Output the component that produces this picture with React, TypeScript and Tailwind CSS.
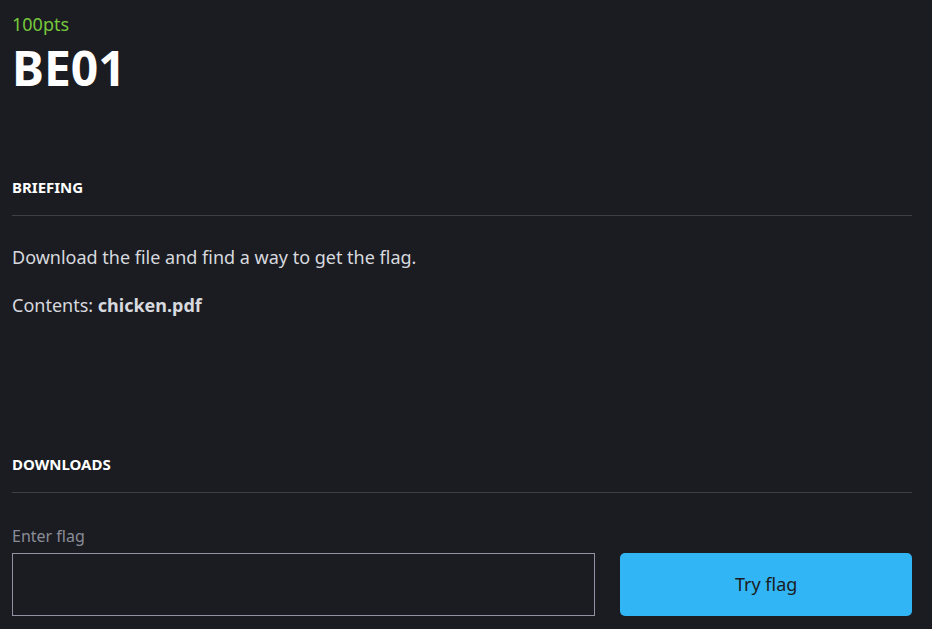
export default function App() {
  return (
    <div className="min-h-screen bg-[#1b1c21] pl-3 pr-5 pt-[10px] font-['Noto_Sans',sans-serif] text-[#d7d9df]">
      <div className="text-[18px] leading-[28px] text-[#76c83c]">100pts</div>
      <h1 className="text-[48px] font-bold leading-[60px] text-white">BE01</h1>

      <section className="mt-[77px]">
        <h2 className="text-[15px] font-bold leading-[24px] text-white">BRIEFING</h2>
        <div className="mt-[16px] border-t border-[#3f4046]" />
        <p className="mt-[27px] text-[18px] leading-[28px]">Download the file and find a way to get the flag.</p>
        <p className="mt-[20px] text-[18px] leading-[28px]">
          Contents: <strong className="font-bold">chicken.pdf</strong>
        </p>
      </section>

      <section className="mt-[133px]">
        <h2 className="text-[15px] font-bold leading-[24px] text-white">DOWNLOADS</h2>
        <div className="mt-[16px] border-t border-[#3f4046]" />
      </section>

      <div className="mt-[31px] text-[16px] leading-[24px] text-[#8a8d98]">Enter flag</div>
      <div className="mt-[5px] grid grid-cols-[2fr_1fr] gap-[25px]">
        <input className="h-[63px] border border-[#8f93a3] bg-transparent px-3 text-white outline-none" />
        <button className="h-[63px] rounded-[5px] bg-[#32b5f5] text-[18px] text-[#1b1c21]">Try flag</button>
      </div>
    </div>
  );
}
